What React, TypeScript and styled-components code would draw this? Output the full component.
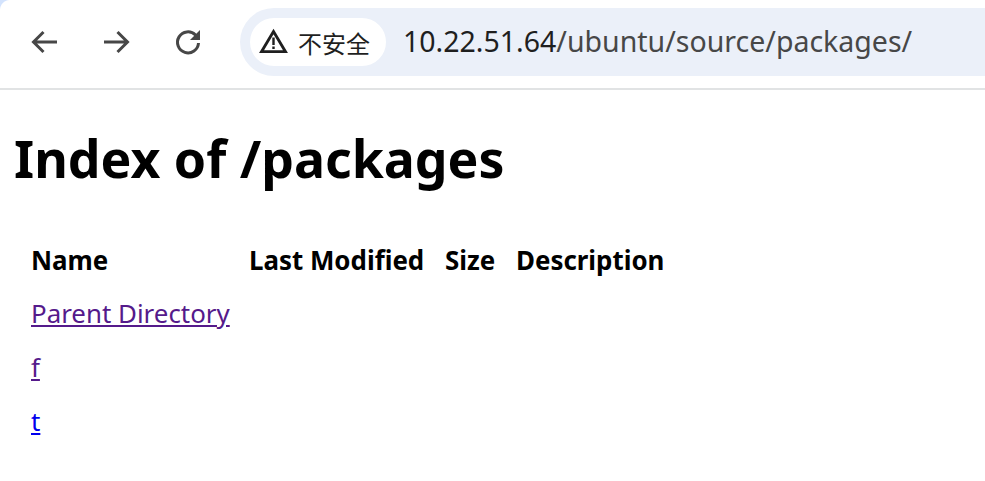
import styled, { createGlobalStyle } from 'styled-components';

const GlobalStyle = createGlobalStyle`
  html, body {
    margin: 0;
    padding: 0;
    background: #fff;
    font-family: "Noto Sans", "Noto Sans CJK SC", "Open Sans", sans-serif;
    overflow: hidden;
  }
`;

const Toolbar = styled.div`
  position: relative;
  display: flex;
  align-items: center;
  height: 90px;
  padding: 8px 0 12px;
  box-sizing: border-box;
  border-bottom: 2px solid #e1e3e4;
  background: #fff;

  /* rounded corner of the tab strip behind the toolbar */
  &::before {
    content: '';
    position: absolute;
    top: 0;
    left: 0;
    width: 10px;
    height: 10px;
    background: radial-gradient(circle at 100% 100%, transparent 9.5px, #d3e3fd 10.5px);
  }
`;

const NavButtons = styled.div`
  display: flex;
  align-items: center;
  gap: 36px;
  padding-left: 27px;
  width: 240px;
  box-sizing: border-box;
`;

const NavIcon = styled.svg`
  width: 36px;
  height: 36px;
  fill: none;
  stroke: #474747;
  stroke-width: 3;
`;

const Omnibox = styled.div`
  flex: 1;
  display: flex;
  align-items: center;
  height: 68px;
  padding-left: 10px;
  border-radius: 34px 0 0 34px;
  background: #ebf0f9;
`;

const SecurityChip = styled.div`
  display: flex;
  align-items: center;
  gap: 9px;
  width: 136px;
  height: 48px;
  padding-left: 9px;
  box-sizing: border-box;
  border-radius: 24px;
  background: #fff;
  color: #1f1f1f;
  font-size: 24px;
  font-family: "Noto Sans CJK SC", sans-serif;
`;

const UrlText = styled.div`
  margin-left: 17px;
  padding-bottom: 2px;
  font-size: 28.5px;
  color: #474747;
  white-space: nowrap;
`;

const UrlHost = styled.span`
  color: #1f1f1f;
`;

const Page = styled.main`
  padding: 0 14px;
`;

const Title = styled.h1`
  margin: 32px 0 0;
  font-size: 51.8px;
  line-height: 72px;
  font-weight: 700;
  color: #000;
`;

const Listing = styled.table`
  margin-top: 39px;
  margin-left: 17px;
  border-collapse: separate;
  border-spacing: 0;
  font-size: 25.9px;
`;

const HeadCell = styled.th<{ $width: number }>`
  width: ${(p) => p.$width}px;
  height: 54px;
  padding: 0 0 1px;
  box-sizing: border-box;
  text-align: left;
  font-weight: 700;
  color: #000;
  white-space: nowrap;
`;

const Cell = styled.td`
  height: 54px;
  padding: 0 0 2px;
  box-sizing: border-box;
`;

const EntryLink = styled.a<{ $visited?: boolean }>`
  color: ${(p) => (p.$visited ? '#551a8b' : '#0000ee')};
  text-decoration: underline;
`;

const entries = [
  { name: 'Parent Directory', visited: true },
  { name: 'f', visited: true },
  { name: 't', visited: false },
];

const App = () => (
  <>
    <GlobalStyle />
    <Toolbar>
      <NavButtons>
        <NavIcon viewBox="0 0 36 36">
          <path d="M30 18H7M16.500 8 6.500 18l10 10" />
        </NavIcon>
        <NavIcon viewBox="0 0 36 36">
          <path d="M5 18h23M18.500 8l10 10-10 10" />
        </NavIcon>
        <NavIcon viewBox="0 0 36 36">
          <path d="M27.500 19a10.500 10.500 0 1 1-3-8l3 3" />
          <path d="M29 6v10H19Z" fill="#474747" stroke="none" />
        </NavIcon>
      </NavButtons>
      <Omnibox>
        <SecurityChip>
          <svg width="30" height="30" viewBox="0 0 30 30">
            <path d="M14.500 4.500 26.500 24.700H2.500Z" fill="none" stroke="#1f1f1f" strokeWidth="2.800" />
            <path d="M13.300 10.500h2.400v7.500h-2.400zM13.300 19.500h2.400v2.500h-2.400z" fill="#1f1f1f" />
          </svg>
          不安全
        </SecurityChip>
        <UrlText>
          <UrlHost>10.22.51.64</UrlHost>/ubuntu/source/packages/
        </UrlText>
      </Omnibox>
    </Toolbar>
    <Page>
      <Title>Index of /packages</Title>
      <Listing>
        <thead>
          <tr>
            <HeadCell $width={218}>Name</HeadCell>
            <HeadCell $width={196}>Last Modified</HeadCell>
            <HeadCell $width={71}>Size</HeadCell>
            <HeadCell $width={160}>Description</HeadCell>
          </tr>
        </thead>
        <tbody>
          {entries.map((entry) => (
            <tr key={entry.name}>
              <Cell>
                <EntryLink href="#" $visited={entry.visited}>{entry.name}</EntryLink>
              </Cell>
              <Cell />
              <Cell />
              <Cell />
            </tr>
          ))}
        </tbody>
      </Listing>
    </Page>
  </>
);

export default App;
